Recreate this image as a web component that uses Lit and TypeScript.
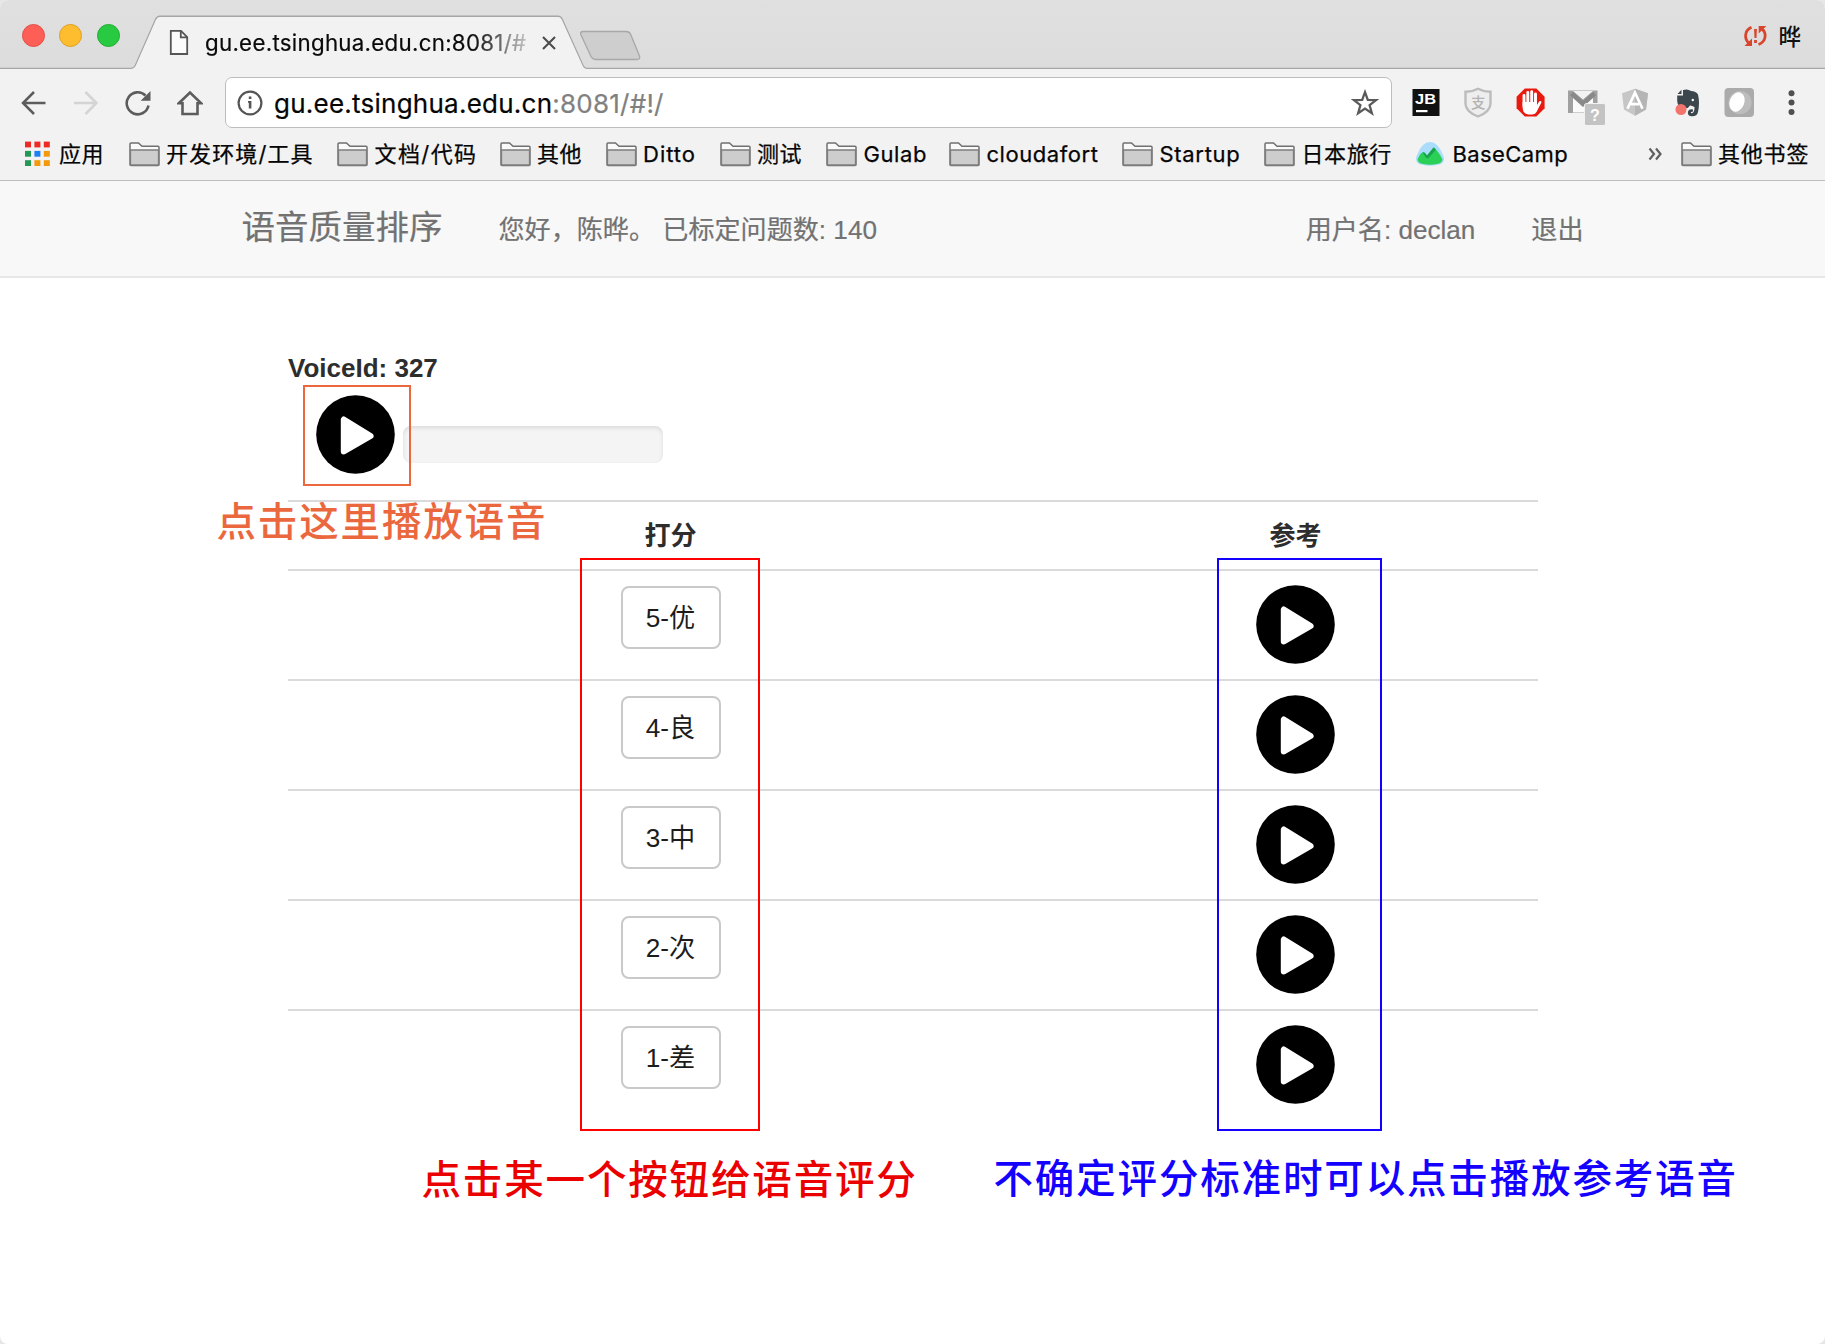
import { LitElement, html, css, svg, nothing } from "lit";
import { customElement, property } from "lit/decorators.js";

const playShape = svg`
  <circle cx="39.5" cy="39.5" r="39.3" fill="#000"/>
  <path d="M27.800 24.5 V56.5 L54.600 41 Z" fill="#fff" stroke="#fff" stroke-width="6" stroke-linejoin="round"/>`;

@customElement("play-button")
export class PlayButton extends LitElement {
  static styles = css`
    :host { display: block; width: 79px; height: 79px; }
    .icon { display: block; width: 79px; height: 79px; }
  `;
  render() {
    return html`<svg class="icon" viewBox="0 0 79 79">${playShape}</svg>`;
  }
}

@customElement("browser-tabs")
export class BrowserTabs extends LitElement {
  static styles = css`
    :host { display: block; }
    .strip {
      box-sizing: border-box; height: 69px; display: flex; align-items: flex-end;
      background: linear-gradient(#e0e0e0, #dcdcdc); position: relative;
    }
    .edge { position: absolute; left: 0; top: 0; width: 1825px; height: 69px; }
    .lights { display: flex; gap: 14.4px; padding: 0 0 22px 22px; width: 147px; box-sizing: border-box; position: relative; }
    .light { width: 23px; height: 23px; border-radius: 50%; box-sizing: border-box; flex: none; }
    .red { background: #fd5f57; border: 1px solid #e2504a; }
    .amber { background: #fdbd2e; border: 1px solid #dfa023; }
    .green { background: #27ca41; border: 1px solid #1eae2e; }
    .tab { position: relative; display: flex; align-items: center; height: 53px; padding-left: 22px; width: 410px; box-sizing: border-box; }
    .page { width: 20px; height: 27px; flex: none; }
    .title {
      font: 22.3px/30px Inter, "Noto Sans", sans-serif; color: #0a0a0a; white-space: nowrap; width: 327px; overflow: hidden;
      -webkit-text-stroke: 0.2px currentColor;
      margin-left: 16px; letter-spacing: 0.28px;
      -webkit-mask-image: linear-gradient(90deg, #000 268px, rgba(0,0,0,.12) 327px);
      mask-image: linear-gradient(90deg, #000 268px, rgba(0,0,0,.12) 327px);
    }
    .close { width: 16px; height: 16px; margin-left: 10px; flex: none; }
    .user { position: relative; margin-left: auto; display: flex; align-items: center; gap: 10px; padding: 0 24px 18.500px 0; }
    .sync { width: 25px; height: 24px; }
    .name { font: 500 22.5px/32px "Noto Sans CJK SC", sans-serif; color: #111; margin-top: -2px; }
  `;
  render() {
    return html`<div class="strip">
      <svg class="edge" viewBox="0 0 1825 69">
        <path d="M0 68.5 H131 Q134 68.5 135.3 65.5 L155.5 19.5 Q157 16.3 160 16.3 H558 Q561 16.3 562.3 19.5 L583 65.5 Q584.5 68.5 587 68.5 H1825" fill="none" stroke="#a6a6a6" stroke-width="1.4"/>
        <path d="M131 69 Q134 69 135.8 65.8 L156 20 Q157.5 17 160 17 H558 Q560.5 17 561.8 20 L582.5 65.8 Q584 69 587 69Z" fill="#f2f2f2"/>
        <path d="M583 31.5 H626 Q629.500 31.5 630.700 34.500 L639.500 56 Q640.500 59.500 637 59.500 H596 Q592.500 59.500 591 56.500 L580.800 34.500 Q580 31.500 583 31.500Z" fill="#cecece" stroke="#a8a8a8" stroke-width="1.3"/>
      </svg>
      <div class="lights"><span class="light red"></span><span class="light amber"></span><span class="light green"></span></div>
      <div class="tab">
        <svg class="page" viewBox="0 0 20 27"><path d="M1.800 1.800 H12 L18.200 8 V25 H1.800Z" fill="#fbfbfb" stroke="#555" stroke-width="1.800"/><path d="M11.800 2 V8.400 H18" fill="none" stroke="#555" stroke-width="1.800"/></svg>
        <span class="title">gu.ee.tsinghua.edu.cn:8081/#</span>
        <svg class="close" viewBox="0 0 16 16"><path d="M2 2 L14 14 M14 2 L2 14" stroke="#4c4c4c" stroke-width="2.100"/></svg>
      </div>
      <div class="user">
        <svg class="sync" viewBox="0 0 25 24">
          <g fill="none" stroke="#d9452c" stroke-width="2.800"><path d="M8.500 3.200 C1 6.500 1 15.500 6.500 19.500"/><path d="M15.500 20.500 C23.500 17.500 24 8.500 18.500 4.500"/></g>
          <path d="M1.500 22 H9 V14.500Z M23.300 2 H15.700 V9.500Z M11.100 5 H13.900 L13.500 14 H11.500Z M11.100 16 H13.900 V19 H11.100Z" fill="#d9452c"/>
        </svg>
        <span class="name">晔</span>
      </div>
    </div>`;
  }
}

@customElement("browser-toolbar")
export class BrowserToolbar extends LitElement {
  static styles = css`
    :host { display: block; }
    .bar { height: 66px; box-sizing: border-box; padding: 8px 0 7px 21px; display: flex; align-items: center; background: #f2f2f2; }
    .nav { width: 26px; height: 26px; margin-right: 26px; flex: none; }
    .omni {
      box-sizing: border-box; width: 1167px; height: 51px; margin-left: -4px; border: 1.500px solid #bdbdbd; border-radius: 7px;
      background: #fff; display: flex; align-items: center; padding: 0 12px 0 11px; flex: none;
    }
    .info { width: 26px; height: 26px; }
    .url { margin-left: 11px; margin-top: 2px; font: 26px/36px Inter, "Noto Sans", sans-serif; color: #050505; letter-spacing: 0.240px; white-space: nowrap; -webkit-text-stroke: 0.2px currentColor; }
    .dim { color: #808080; }
    .star { width: 28px; height: 28px; margin-left: auto; }
    .exts { width: 412px; height: 44px; margin-left: 12px; flex: none; }
  `;
  render() {
    return html`<div class="bar">
      <svg class="nav" viewBox="0 0 26 26"><path d="M24.500 13 H2.500 M13 2 L2 13 L13 24" fill="none" stroke="#5c5c5c" stroke-width="2.500"/></svg>
      <svg class="nav" viewBox="0 0 26 26"><path d="M1 13 H23 M12.500 2 L23.500 13 L12.500 24" fill="none" stroke="#d4d4d4" stroke-width="2.500"/></svg>
      <svg class="nav" viewBox="0 0 26 26"><path d="M20.500 5.500 A11 11 0 1 0 23.500 15.500" fill="none" stroke="#5c5c5c" stroke-width="2.600"/><path d="M25.500 1 V10.800 H15.700Z" fill="#5c5c5c"/></svg>
      <svg class="nav" viewBox="0 0 26 26"><path d="M1.800 13.300 L13 2.500 L24.200 13.300 H20.500 V24 H5.500 V13.300Z" fill="none" stroke="#5c5c5c" stroke-width="2.600"/></svg>
      <div class="omni">
        <svg class="info" viewBox="0 0 26 26"><circle cx="13" cy="13" r="11.400" fill="none" stroke="#555" stroke-width="2.200"/><path d="M11.800 6.500 h2.600 v2.600 h-2.600Z M11 11 h3.400 v7.500 h-2.600 v-5.700 h-.8Z" fill="#555"/></svg>
        <span class="url">gu.ee.tsinghua.edu.cn<span class="dim">:8081/#!/</span></span>
        <svg class="star" viewBox="0 0 28 28"><path d="M14 3.200 L16.800 10.800 L25 11.100 L18.600 16.200 L20.900 24.200 L14 19.600 L7.100 24.200 L9.400 16.200 L3 11.100 L11.200 10.800Z" fill="none" stroke="#5a5a5a" stroke-width="2.300"/></svg>
      </div>
      <svg class="exts" viewBox="1404 81 412 44">
        <rect x="1412.500" y="89" width="27" height="27" fill="#111"/>
        <text x="1415" y="103.500" font-family="Liberation Sans" font-weight="700" font-size="15.500" textLength="21" lengthAdjust="spacingAndGlyphs" fill="#fff">JB</text>
        <rect x="1416" y="110" width="11.500" height="2.200" fill="#fff"/>
        <path d="M1478 88.800 Q1484 92 1490.500 91.800 V104 Q1490 112 1478 116.500 Q1466 112 1465.500 104 V91.800 Q1472 92 1478 88.800Z" fill="#eee" stroke="#bcbcbc" stroke-width="2.400"/>
        <text x="1471" y="107.500" font-family="Noto Sans CJK SC" font-weight="500" font-size="14.500" fill="#b3b3b3">支</text>
        <path d="M1524.800 88.500 H1536.400 L1544.600 96.700 V108.300 L1536.400 116.500 H1524.800 L1516.600 108.300 V96.700Z" fill="#e9190f"/>
        <path d="M1524 106 V95.500 M1527.800 104 V92.500 M1531.700 104 V91.700 M1535.500 105 V94" stroke="#fff" stroke-width="2.900" stroke-linecap="round"/>
        <path d="M1522.600 102 H1537 V105 L1539.300 101.300 Q1541.800 100.500 1541.300 102.700 L1536.500 112 Q1535.500 114.300 1532.500 114.500 H1528.500 Q1522.600 114 1522.600 107Z" fill="#fff"/>
        <rect x="1568" y="90.500" width="29.500" height="22.500" fill="#a0a0a0"/>
        <path d="M1573 91 H1593 L1583 99.500Z" fill="#f3f3f3"/>
        <path d="M1573 112.500 V96 L1583 106 L1593 96 V112.500Z" fill="#fafafa"/>
        <path d="M1571.500 93.500 L1583 104 L1594.500 93.500" fill="none" stroke="#898989" stroke-width="4.600"/>
        <rect x="1584.500" y="103.500" width="21" height="22" rx="2" fill="#c3c3c3" stroke="#f2f2f2"/>
        <text x="1590" y="120.500" font-family="Liberation Sans" font-weight="700" font-size="16" fill="#fff">?</text>
        <path d="M1635 88.800 L1648 93.300 L1646 109.500 L1635 115.800 L1624 109.500 L1622 93.300Z" fill="#c6c6c6"/>
        <path d="M1635 88.800 L1648 93.300 L1646 109.500 L1635 115.800Z" fill="#b5b5b5"/>
        <path d="M1627.500 108.800 L1635 92.800 L1642.500 108.800 M1631 104.200 H1639" fill="none" stroke="#fff" stroke-width="2.700"/>
        <path d="M1683 94.500 V90 Q1688 88.500 1691 91 Q1696 91 1698 94.500 Q1700 103 1698 112 Q1697 116.500 1692 116.300 Q1687 116 1688 111.500 Q1689 108.500 1693 109.500 V111.500 Q1690.500 111.500 1691 113 Q1694.500 114 1694.500 107 Q1691 105 1690 105.500 Q1688 109 1684.500 108 Q1677.500 108 1677.200 101 V95.500 H1683Z" fill="#3b474d"/>
        <path d="M1677.500 94 L1681.500 89.800 V94Z" fill="#3b474d"/><circle cx="1692.800" cy="100" r="1.200" fill="#fff"/>
        <circle cx="1681" cy="109.500" r="5.500" fill="#f3746c"/>
        <rect x="1724.500" y="88" width="29.500" height="29" rx="4" fill="#ababab"/>
        <circle cx="1740" cy="102.500" r="11.500" fill="#bdbdbd"/>
        <ellipse cx="1737" cy="102" rx="7.300" ry="10" transform="rotate(22 1737 102)" fill="#fff"/>
        <g fill="#505050"><circle cx="1791.500" cy="93.200" r="3"/><circle cx="1791.500" cy="102.600" r="3"/><circle cx="1791.500" cy="112" r="3"/></g>
      </svg>
    </div>`;
  }
}

type Mark = { label: string; icon: "apps" | "folder" | "basecamp"; width: number; spacing?: number };

@customElement("bookmark-bar")
export class BookmarkBar extends LitElement {
  static styles = css`
    :host { display: block; }
    .bar { box-sizing: border-box; height: 46px; padding: 0 0 7px 24px; border-bottom: 1.500px solid #bdbdbd; background: #f2f2f2; display: flex; align-items: center; }
    .mark { display: flex; align-items: center; flex: none; white-space: nowrap; }
    .icon { width: 31px; height: 26px; margin-right: 6.500px; flex: none; }
    .apps { width: 27px; margin-right: 8px; }
    .label { font: 22px/30px Inter, "Noto Sans CJK SC", sans-serif; color: #050505; -webkit-text-stroke: 0.25px currentColor; }
    .more { width: 14px; height: 14px; margin-left: auto; margin-right: 19px; }
  `;
  private marks: Mark[] = [
    { label: "应用", icon: "apps", width: 104.500, spacing: 0.5 },
    { label: "开发环境/工具", icon: "folder", width: 208.500, spacing: 1.100 },
    { label: "文档/代码", icon: "folder", width: 162.500, spacing: 1.400 },
    { label: "其他", icon: "folder", width: 106, spacing: 0.5 },
    { label: "Ditto", icon: "folder", width: 114, spacing: 1 },
    { label: "测试", icon: "folder", width: 106.500, spacing: 0.5 },
    { label: "Gulab", icon: "folder", width: 123, spacing: 0.600 },
    { label: "cloudafort", icon: "folder", width: 173, spacing: 0.550 },
    { label: "Startup", icon: "folder", width: 142, spacing: 0.700 },
    { label: "日本旅行", icon: "folder", width: 151, spacing: 0.6 },
    { label: "BaseCamp", icon: "basecamp", width: 160, spacing: 0.400 },
  ];
  private icon(kind: Mark["icon"]) {
    if (kind === "apps") {
      const colors = ["#ee2a24", "#ee2a24", "#ee2a24", "#229954", "#1a80f5", "#f29a0c", "#229954", "#f29a0c", "#f29a0c"];
      return html`<svg class="icon apps" viewBox="0 0 27 26">${colors.map(
        (c, i) => svg`<rect x=${1 + (i % 3) * 9.4} y=${0.6 + Math.floor(i / 3) * 9.3} width="6" height="5.800" fill=${c}/>`
      )}</svg>`;
    }
    if (kind === "basecamp") {
      return html`<svg class="icon" viewBox="0 0 31 26"><path d="M15 1 Q23 1 28 14 Q31 20 26 23 Q15 26.500 4 23 Q-1 20 2 14 Q7 1 15 1Z" fill="#aadcfb"/><path d="M2.500 18.500 Q6 10 9.500 11.500 L12 14.500 L18.800 6.500 Q24 11 27.500 18.500 Q27 22 23 22.800 Q15 24.500 7 22.800 Q3 22 2.500 18.500Z" fill="#2bd156"/><path d="M7.500 11.500 Q9.500 10.500 12 14.500 L18.500 6.500 Q20.500 7 20.800 9 L13.500 17 Q12 18 10.500 16Z" fill="#17a44a"/></svg>`;
    }
    return html`<svg class="icon" viewBox="0 0 31 26"><path d="M1 23.500 V3 Q1 2 2 2 H9.500 L13 5.300 H29 Q30 5.300 30 6.300 V23.500 Q30 24.500 29 24.500 H2 Q1 24.500 1 23.500Z" fill="#fafafa" stroke="#707070" stroke-width="1.500"/><path d="M1.500 9 H29.500 V24 H1.500Z" fill="#cdcdcd" stroke="#7d7d7d" stroke-width="1.300"/></svg>`;
  }
  render() {
    return html`<div class="bar">
      ${this.marks.map(
        (m) => html`<div class="mark" style="width:${m.width}px">${this.icon(m.icon)}<span class="label" style="letter-spacing:${m.spacing ?? 0}px">${m.label}</span></div>`
      )}
      <svg class="more" viewBox="0 0 14 14"><path d="M1.500 1.500 L6 7 L1.500 12.500 M8 1.500 L12.500 7 L8 12.500" fill="none" stroke="#606060" stroke-width="2.200"/></svg>
      <div class="mark" style="width:144.500px">${this.icon("folder")}<span class="label" style="letter-spacing:0.8px">其他书签</span></div>
    </div>`;
  }
}

@customElement("callout-box")
export class CalloutBox extends LitElement {
  static styles = css`
    :host { display: contents; }
    .frame { position: absolute; box-sizing: border-box; border: 2px solid; }
    .play { left: 303px; top: 385px; width: 108px; height: 101px; color: #eb683f; }
    .score { left: 580px; top: 558px; width: 180px; height: 573px; color: #f00; }
    .reference { left: 1217px; top: 558px; width: 165px; height: 573px; color: #1400ff; }
    .note { position: absolute; font: 500 39.500px/48px "Noto Sans CJK SC", sans-serif; letter-spacing: 1.850px; white-space: nowrap; }
    .note.play { left: 216.500px; top: 495px; width: auto; height: auto; }
    .note.score { left: 421.500px; top: 1153px; width: auto; height: auto; color: #eb0000; }
    .note.reference { left: 993.500px; top: 1152px; width: auto; height: auto; }
  `;
  @property() kind = "play";
  @property() text = "";
  render() {
    return html`<div class="frame ${this.kind}"></div>${this.text ? html`<div class="note ${this.kind}">${this.text}</div>` : nothing}`;
  }
}

@customElement("app-root")
export class AppRoot extends LitElement {
  static styles = css`
    :host { display: block; background: #fff; }
    .window { position: relative; width: 1825px; height: 1344px; overflow: hidden; border-radius: 8px; background: #fff; box-sizing: border-box; font-family: "Liberation Sans", "Noto Sans CJK SC", sans-serif; }
    .backdrop { background: #e6e6e6; }
    .navbar { box-sizing: border-box; height: 97px; border-bottom: 2px solid #e7e7e7; background: #f8f8f8; padding: 0 241.500px 0 241.500px; display: flex; align-items: center; color: #727272; }
    .brand { font-size: 33.500px; line-height: 44px; margin-top: -1px; -webkit-text-stroke: 0.2px currentColor; }
    .item { font-size: 26.100px; line-height: 36px; margin-left: 56px; margin-top: 3px; white-space: pre; -webkit-text-stroke: 0.2px currentColor; }
    .push { margin-left: auto; }
    .main { padding: 72px 287px 0 288px; }
    .voice { font-size: 26px; line-height: 36px; font-weight: 700; color: #2d2d2d; height: 45px; }
    .player { display: flex; height: 105px; padding-left: 28.300px; align-items: flex-start; }
    .track { width: 260.500px; height: 37px; margin: 31px 0 0 7.700px; border-radius: 8px; background: #f4f4f4; box-shadow: inset 0 2px 4px rgba(0,0,0,.1); }
    .row { display: grid; grid-template-columns: 765px 485px; justify-items: center; align-items: start; box-sizing: border-box; height: 110px; border-top: 2px solid #dadada; padding-top: 14px; }
    .head { height: 69px; padding-top: 16px; font-weight: 700; font-size: 26px; line-height: 36px; color: #2d2d2d; }
    .score { box-sizing: border-box; width: 100px; height: 63px; margin-top: 1px; border: 2px solid #c9c9c9; border-radius: 8px; background: #fff; color: #1c1c1c; font: 26.200px/58px "Liberation Sans", "Noto Sans CJK SC", sans-serif; text-align: center; padding: 0; }
  `;
  private scores = ["5-优", "4-良", "3-中", "2-次", "1-差"];
  render() {
    return html`<div class="backdrop"><div class="window">
      <browser-tabs></browser-tabs>
      <browser-toolbar></browser-toolbar>
      <bookmark-bar></bookmark-bar>
      <nav class="navbar">
        <span class="brand">语音质量排序</span>
        <span class="item">您好，陈晔。 已标定问题数: 140</span>
        <span class="item push">用户名: declan</span>
        <span class="item">退出</span>
      </nav>
      <main class="main">
        <div class="voice">VoiceId: 327</div>
        <div class="player"><play-button></play-button><div class="track"></div></div>
        <div class="row head"><span>打分</span><span>参考</span></div>
        ${this.scores.map((s) => html`<div class="row"><button class="score">${s}</button><play-button></play-button></div>`)}
      </main>
      <callout-box kind="play" text="点击这里播放语音"></callout-box>
      <callout-box kind="score" text="点击某一个按钮给语音评分"></callout-box>
      <callout-box kind="reference" text="不确定评分标准时可以点击播放参考语音"></callout-box>
    </div></div>`;
  }
}
